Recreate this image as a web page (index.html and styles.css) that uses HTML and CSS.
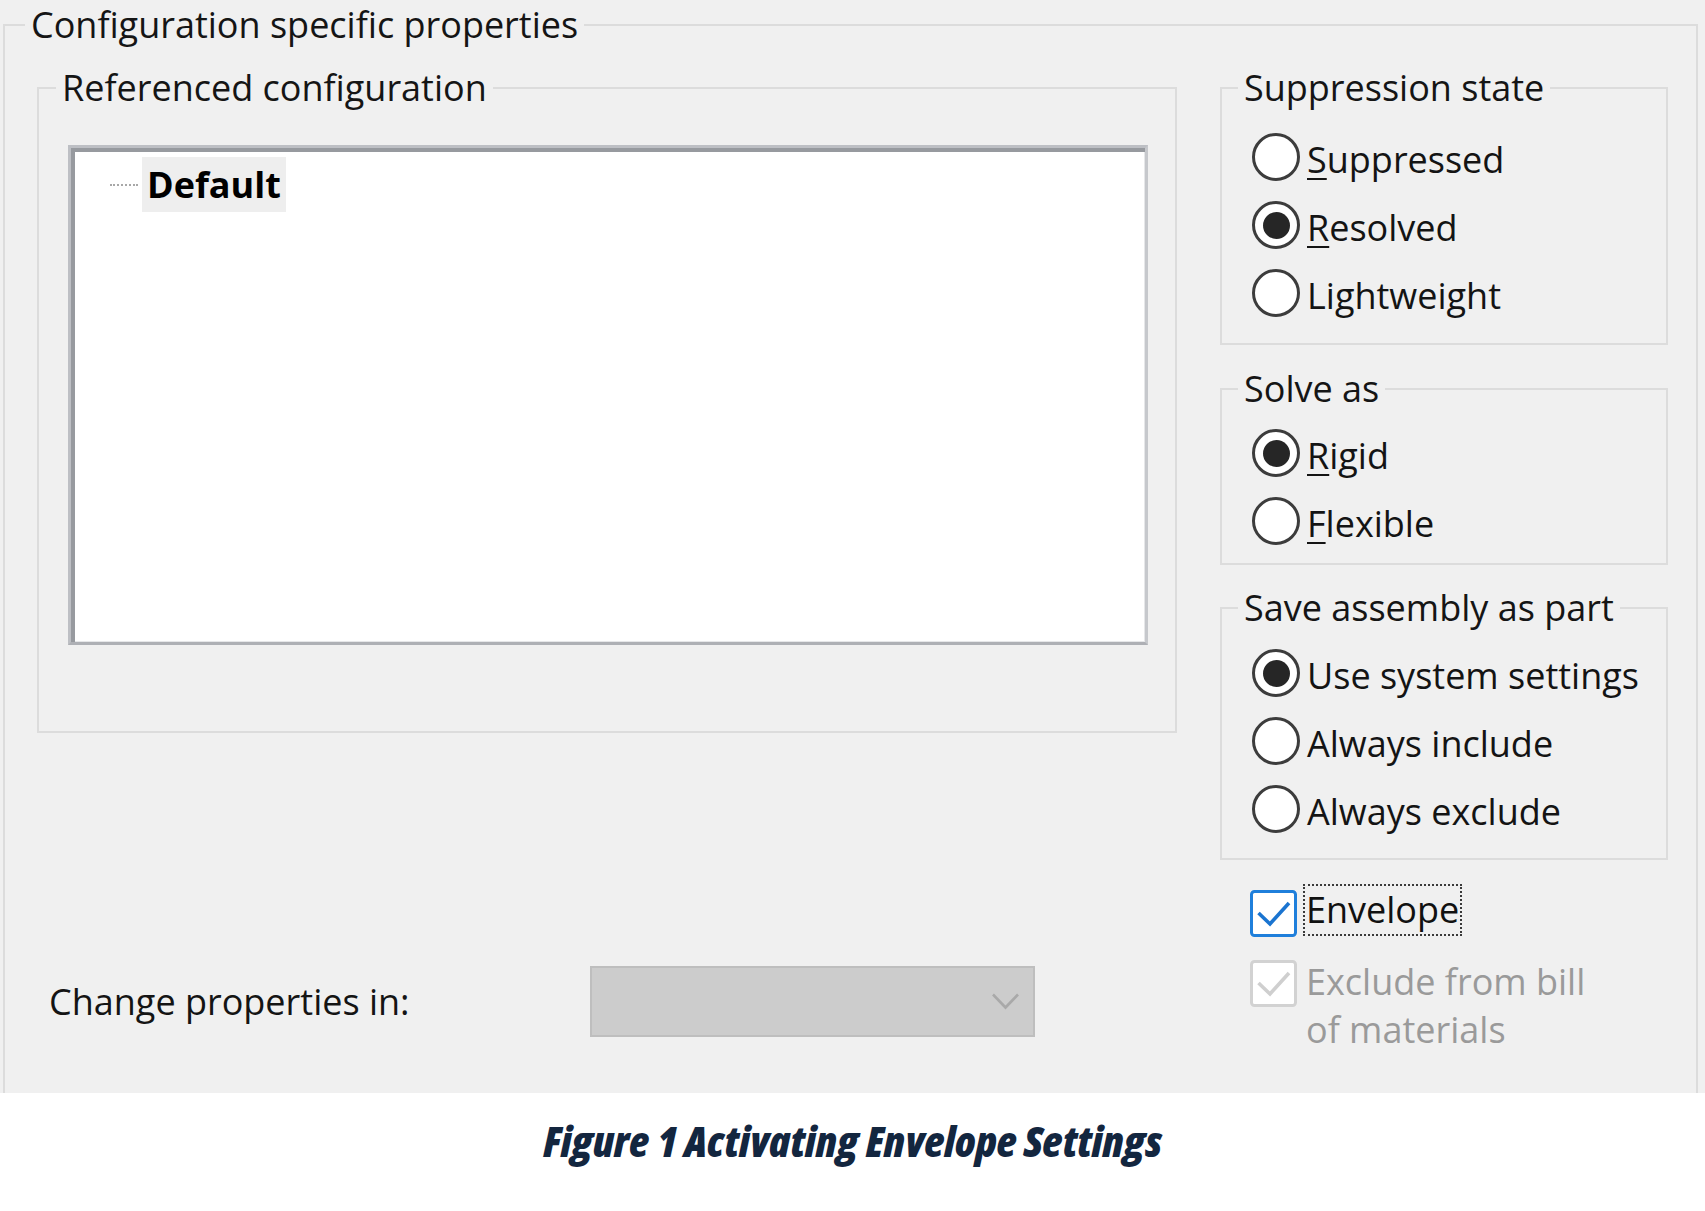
FILE: index.html
```html
<!DOCTYPE html>
<html lang="en">
<head>
<meta charset="utf-8">
<title>Configuration specific properties</title>
<link rel="stylesheet" href="styles.css">
</head>
<body>
<div class="dialog">
  <fieldset class="group outer">
    <legend>Configuration specific properties</legend>
    <div class="columns">
      <div class="col-left">
        <fieldset class="group ref">
          <legend>Referenced configuration</legend>
          <div class="tree">
            <div class="tree-item"><span class="tree-line"></span><span class="tree-label">Default</span></div>
          </div>
        </fieldset>
        <div class="change-row">
          <span class="change-label">Change properties in:</span>
          <div class="combo">
            <svg class="chev" width="27" height="17" viewBox="0 0 27 17"><polyline points="1,1.5 13.5,14.5 26,1.5" fill="none" stroke="#a9a9a9" stroke-width="2.6"/></svg>
          </div>
        </div>
      </div>
      <div class="col-right">
        <fieldset class="group opts supp">
          <legend>Suppression state</legend>
          <div class="option"><span class="radio"></span><span class="opt-text"><u>S</u>uppressed</span></div>
          <div class="option"><span class="radio on"></span><span class="opt-text"><u>R</u>esolved</span></div>
          <div class="option"><span class="radio"></span><span class="opt-text">Lightweight</span></div>
        </fieldset>
        <fieldset class="group opts solve">
          <legend>Solve as</legend>
          <div class="option"><span class="radio on"></span><span class="opt-text"><u>R</u>igid</span></div>
          <div class="option"><span class="radio"></span><span class="opt-text"><u>F</u>lexible</span></div>
        </fieldset>
        <fieldset class="group opts save">
          <legend>Save assembly as part</legend>
          <div class="option"><span class="radio on"></span><span class="opt-text">Use system settings</span></div>
          <div class="option"><span class="radio"></span><span class="opt-text">Always include</span></div>
          <div class="option"><span class="radio"></span><span class="opt-text">Always exclude</span></div>
        </fieldset>
        <div class="check-row envelope">
          <span class="checkbox">
            <svg width="47" height="47" viewBox="0 0 47 47"><rect x="1.5" y="1.5" width="44" height="44" rx="3" fill="#fff" stroke="#1f7fdb" stroke-width="3"/><polyline points="8.5,23 20,34 39,13" fill="none" stroke="#1a74d0" stroke-width="3.6"/></svg>
          </span>
          <span class="focus">Envelope</span>
        </div>
        <div class="check-row excl">
          <span class="checkbox">
            <svg width="47" height="47" viewBox="0 0 47 47"><rect x="1.5" y="1.5" width="44" height="44" rx="3" fill="#fff" stroke="#d2d2d2" stroke-width="3"/><polyline points="8.5,23 20,34 39,13" fill="none" stroke="#cfcfcf" stroke-width="3.6"/></svg>
          </span>
          <span class="opt-text disabled">Exclude from bill<br>of materials</span>
        </div>
      </div>
    </div>
  </fieldset>
</div>
<p class="caption"><span class="caption-text">Figure 1 Activating Envelope Settings</span></p>
</body>
</html>
```

FILE: styles.css
```css
* { box-sizing: border-box; }

html, body {
  margin: 0;
  background: #ffffff;
}

body {
  width: 1705px;
  font-family: "Open Sans", "Noto Sans", sans-serif;
  font-size: 36px;
  color: #141414;
}

.dialog {
  height: 1093px;
  background: #f0f0f0;
  overflow: hidden;
  padding: 2px 7px 0 3px;
}

.group {
  margin: 0;
  min-width: 0;
  border: 2px solid #dcdcdc;
}

.group > legend {
  padding: 0 6px;
  margin-left: -12px;
  line-height: 48px;
  font-size: 36px;
  color: #151515;
}

.outer {
  padding: 16px 28px 80px 32px;
  border-bottom: none;
}

.outer > legend {
  line-height: 46px;
}

.columns {
  display: flex;
  gap: 43px;
}

.col-left {
  width: 1140px;
  display: flex;
  flex-direction: column;
}

.col-right {
  width: 448px;
  display: flex;
  flex-direction: column;
}

/* Referenced configuration */
.ref {
  padding: 33px 27px 86px 29px;
}

.tree {
  height: 500px;
  background: #ffffff;
  border-style: solid;
  border-width: 3px;
  border-color: #bdbfc4 #c6c8cc #aeb0b5 #bdbfc4;
  box-shadow: inset 4px 4px 0 #979a9f, inset -1px -1px 0 #e6e7e9;
}

.tree-item {
  display: flex;
  align-items: center;
  margin-top: 9px;
  padding-left: 39px;
}

.tree-line {
  width: 28px;
  border-top: 2px dotted #a8a8a8;
  margin-right: 4px;
}

.tree-label {
  font-weight: 700;
  line-height: 55px;
  padding: 0 5px;
  background: #eeeeee;
  color: #000;
}

/* Change properties row */
.change-row {
  display: flex;
  align-items: center;
  margin-top: 233px;
  height: 71px;
  padding-left: 12px;
}

.change-label {
  width: 541px;
  line-height: 48px;
}

.combo {
  width: 445px;
  height: 71px;
  background: #cccccc;
  border: 2px solid #bebebe;
  display: flex;
  align-items: center;
  justify-content: flex-end;
  padding-right: 14px;
}

/* Option groups */
.opts {
  padding-left: 28px;
  padding-right: 0;
}

.supp { padding-top: 11px; padding-bottom: 16px; }
.solve { margin-top: 20px; padding-top: 6px; padding-bottom: 8px; }
.save { margin-top: 19px; padding-top: 7px; padding-bottom: 15px; }

.option {
  display: flex;
  align-items: center;
  height: 68px;
}

.radio {
  flex: none;
  width: 48px;
  height: 48px;
  margin-left: 2px;
  margin-right: 7px;
  border: 3px solid #3c3c3c;
  border-radius: 50%;
  background: #ffffff;
  display: flex;
  align-items: center;
  justify-content: center;
}

.radio.on::after {
  content: "";
  width: 27px;
  height: 27px;
  border-radius: 50%;
  background: #262626;
}

.opt-text {
  line-height: 48px;
  white-space: nowrap;
}

.option .opt-text {
  margin-top: 6px;
}

.opt-text u {
  text-decoration-thickness: 2px;
  text-underline-offset: 5px;
}

/* Checkboxes */
.check-row {
  display: flex;
  align-items: flex-start;
  padding-left: 30px;
}

.checkbox {
  flex: none;
  width: 47px;
  height: 47px;
  display: block;
}

.checkbox svg { display: block; }

.envelope {
  margin-top: 24px;
}

.envelope .checkbox {
  margin-top: 6px;
  margin-right: 6px;
}

.focus {
  border: 2px dotted #3a3a3a;
  line-height: 48px;
  padding: 0 1px;
  color: #111;
}

.excl {
  margin-top: 21px;
}

.excl .checkbox {
  margin-top: 2px;
  margin-right: 9px;
}

.disabled {
  color: #9a9a9a;
}

/* Caption */
.caption {
  margin: 0;
  padding-top: 18px;
  text-align: center;
}

.caption-text {
  display: inline-block;
  font-family: "Open Sans", "Noto Sans", sans-serif;
  font-style: italic;
  font-weight: 800;
  font-size: 43px;
  font-stretch: 80%;
  letter-spacing: 0;
  color: #13263f;
}
```
